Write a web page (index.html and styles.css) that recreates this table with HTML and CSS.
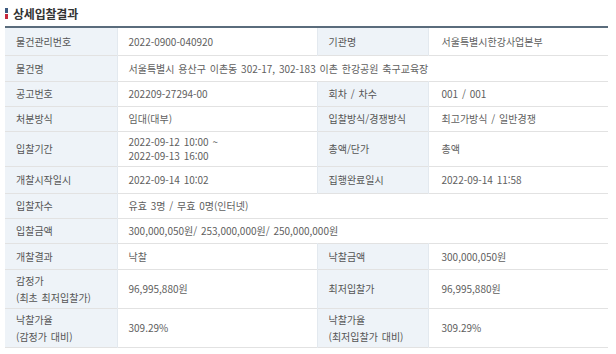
FILE: index.html
```html
<!DOCTYPE html>
<html lang="ko">
<head>
<meta charset="utf-8">
<title>상세입찰결과</title>
<link rel="stylesheet" href="styles.css">
</head>
<body>
<div class="wrap">
  <h2 class="title"><span class="mark"></span>상세입찰결과</h2>
  <table class="info">
    <colgroup>
      <col class="c1"><col class="c2"><col class="c3"><col class="c4">
    </colgroup>
    <tr class="h28">
      <th>물건관리번호</th><td>2022-0900-040920</td>
      <th class="rl">기관명</th><td class="rv">서울특별시한강사업본부</td>
    </tr>
    <tr class="h26">
      <th>물건명</th><td colspan="3">서울특별시 용산구 이촌동 302-17, 302-183 이촌 한강공원 축구교육장</td>
    </tr>
    <tr class="h25">
      <th>공고번호</th><td>202209-27294-00</td>
      <th class="rl">회차 / 차수</th><td class="rv">001 / 001</td>
    </tr>
    <tr class="h25">
      <th>처분방식</th><td>임대(대부)</td>
      <th class="rl">입찰방식/경쟁방식</th><td class="rv">최고가방식 / 일반경쟁</td>
    </tr>
    <tr class="h35">
      <th>입찰기간</th><td class="tight">2022-09-12 10:00 ~<br>2022-09-13 16:00</td>
      <th class="rl">총액/단가</th><td class="rv">총액</td>
    </tr>
    <tr class="h27">
      <th>개찰시작일시</th><td>2022-09-14 10:02</td>
      <th class="rl">집행완료일시</th><td class="rv">2022-09-14 11:58</td>
    </tr>
    <tr class="h25">
      <th>입찰자수</th><td colspan="3">유효 3명 / 무효 0명(인터넷)</td>
    </tr>
    <tr class="h25">
      <th>입찰금액</th><td colspan="3">300,000,050원/ 253,000,000원/ 250,000,000원</td>
    </tr>
    <tr class="h26">
      <th>개찰결과</th><td>낙찰</td>
      <th class="rl">낙찰금액</th><td class="rv">300,000,050원</td>
    </tr>
    <tr class="h39">
      <th class="two">감정가<br>(최초 최저입찰가)</th><td>96,995,880원</td>
      <th class="rl">최저입찰가</th><td class="rv">96,995,880원</td>
    </tr>
    <tr class="h39">
      <th class="two">낙찰가율<br>(감정가 대비)</th><td>309.29%</td>
      <th class="rl two">낙찰가율<br>(최저입찰가 대비)</th><td class="rv">309.29%</td>
    </tr>
  </table>
</div>
</body>
</html>
```

FILE: styles.css
```css
html, body {
  margin: 0;
  padding: 0;
  background: #ffffff;
}
body {
  font-family: "Noto Sans CJK KR", "Noto Sans", sans-serif;
  color: #555;
}
.wrap {
  padding: 0 8px 0 5px;
}
.title {
  display: flex;
  align-items: center;
  gap: 5px;
  margin: 0;
  height: 26px;
  font-size: 12px;
  font-weight: bold;
  color: #333;
  letter-spacing: -0.2px;
}
.mark {
  width: 3px;
  height: 11px;
  background: linear-gradient(#3d5a80 0 5px, #fff 5px 6px, #c8283c 6px);
}
.info {
  width: 603px;
  border-collapse: collapse;
  table-layout: fixed;
  border-top: 2px solid #5a6c7c;
  font-size: 10px;
  word-spacing: 1px;
}
.c1 { width: 112px; }
.c2 { width: 200px; }
.c3 { width: 111px; }
.c4 { width: 180px; }
.info tr { border-bottom: 1px solid #e2e2e2; }
.info th, .info td {
  padding: 0 11px;
  text-align: left;
  vertical-align: middle;
  line-height: 15px;
  white-space: nowrap;
  overflow: hidden;
}
.info th {
  font-weight: normal;
  background: #eef3f8;
  color: #555;
  border-right: 1px solid #e3e9ef;
}
.info th.rl { border-left: 1px solid #e3e9ef; }
.info td { color: #606060; }
.info td.rv { padding-left: 13px; }
.info td.tight { line-height: 14px; }
.info th.two { line-height: 17px; }
.h25 { height: 25px; }
.h26 { height: 26px; }
.h27 { height: 27px; }
.h28 { height: 28px; }
.h35 { height: 35px; }
.h39 { height: 39px; }
```
